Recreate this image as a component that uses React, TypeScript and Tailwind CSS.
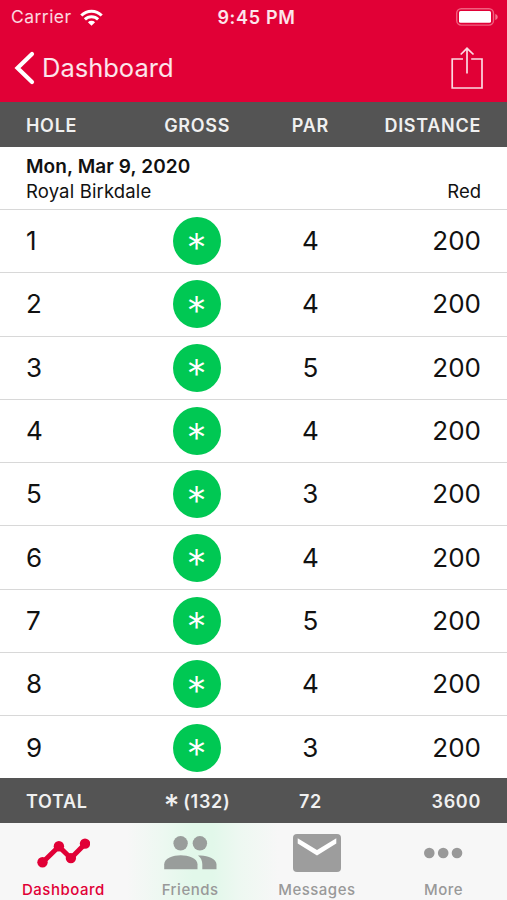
const HOLES = [
  { hole: 1, par: 4, distance: 200 },
  { hole: 2, par: 4, distance: 200 },
  { hole: 3, par: 5, distance: 200 },
  { hole: 4, par: 4, distance: 200 },
  { hole: 5, par: 3, distance: 200 },
  { hole: 6, par: 4, distance: 200 },
  { hole: 7, par: 5, distance: 200 },
  { hole: 8, par: 4, distance: 200 },
  { hole: 9, par: 3, distance: 200 },
]

function WifiIcon() {
  return (
    <svg width="23" height="18" viewBox="0 0 23 18" fill="none" stroke="#fff" strokeWidth="3">
      <path d="M1.3 6.5a14.4 14.4 0 0 1 20.4 0" />
      <path d="M4.9 10.4a9.4 9.4 0 0 1 13.2 0" />
      <path d="M11.5 16.8 7.9 13.3a5.1 5.1 0 0 1 7.2 0z" fill="#fff" stroke="none" />
    </svg>
  )
}

function BatteryIcon() {
  return (
    <svg width="42" height="18" viewBox="0 0 42 18" fill="none">
      <rect x="0.7" y="0.7" width="36.8" height="16.4" rx="4.5" stroke="#f0607f" strokeWidth="1.4" />
      <rect x="3" y="3" width="32" height="11.8" rx="1.5" fill="#fff" />
      <path d="M39.3 6c1.6.6 2.4 1.6 2.4 3s-.8 2.4-2.4 3z" fill="#f4748f" />
    </svg>
  )
}

function BackIcon() {
  return (
    <svg width="21" height="34" viewBox="0 0 21 34" fill="none" stroke="#fff" strokeWidth="4.2" strokeLinecap="round">
      <path d="M18 3 3.5 17 18 31" />
    </svg>
  )
}

function ShareIcon() {
  return (
    <svg width="32" height="44" viewBox="0 0 32 44" fill="none" stroke="#fff" strokeOpacity="0.85" strokeWidth="1.7">
      <path d="M12 13H1.2v29H31V13H20.2" />
      <path d="M16 27.5V2.5M9.7 8.5 16 2.3l6.5 6.200" />
    </svg>
  )
}

function ChartIcon() {
  return (
    <svg width="54" height="32" viewBox="0 0 54 32" fill="#e10036">
      <path d="M6.500 25.500 22.900 9.500 34.900 21.300 49 7" fill="none" stroke="#e10036" strokeWidth="5" />
      <circle cx="6.500" cy="25.200" r="5.200" />
      <circle cx="22.900" cy="9.200" r="5.200" />
      <circle cx="34.900" cy="21.100" r="5.200" />
      <circle cx="49" cy="6.600" r="5.200" />
    </svg>
  )
}

function FriendsIcon() {
  return (
    <svg width="54" height="34" viewBox="0 0 54 34" fill="#999d9b">
      <circle cx="17.6" cy="7.3" r="7.2" />
      <circle cx="36.9" cy="7.3" r="7.2" />
      <path d="M1.200 33.300v-5c0-6 9-9 16.500-9s16.800 3 16.800 9v5z" />
      <path d="M35 19.600c8-1 18.500 2.700 18.500 8.700v5H39.300v-5c0-3.600-1.500-6.500-4.300-8.700z" />
    </svg>
  )
}

function MailIcon() {
  return (
    <svg width="48" height="38" viewBox="0 0 48 38">
      <rect width="48" height="38" rx="4" fill="#9d9d9d" />
      <path d="M4.700 4.200 24 16 43.300 4.200v5.300L24 21.500 4.700 9.500z" fill="#fff" />
    </svg>
  )
}

function MoreIcon() {
  return (
    <svg width="40" height="12" viewBox="0 0 40 12" fill="#999">
      <circle cx="5.300" cy="6" r="5.300" />
      <circle cx="19.200" cy="6" r="5.300" />
      <circle cx="33" cy="6" r="5.300" />
    </svg>
  )
}

const TABS = [
  { label: 'Dashboard', icon: <ChartIcon />, active: true },
  { label: 'Friends', icon: <FriendsIcon /> },
  { label: 'Messages', icon: <MailIcon /> },
  { label: 'More', icon: <MoreIcon /> },
]

export default function App() {
  return (
    <div className="flex h-[900px] w-[507px] flex-col overflow-hidden bg-white font-['Inter','Liberation_Sans',sans-serif] text-[#111]">
      <header className="h-[102px] shrink-0 bg-[#e10036] text-white">
        <div className="grid h-[34px] grid-cols-3 items-center pl-[11px] pr-[9px]">
          <div className="flex items-center gap-2 pt-px text-[17.5px] tracking-[0.45px] text-white/85">
            Carrier <WifiIcon />
          </div>
          <div className="pl-1 pt-px text-center text-[18px] font-semibold tracking-[0.7px] text-white/90">9:45 PM</div>
          <div className="flex justify-end"><BatteryIcon /></div>
        </div>
        <div className="flex h-[68px] items-center justify-between pl-[14px] pr-[24px]">
          <button className="flex items-center gap-[7px] text-[25.5px] leading-none text-white/90">
            <BackIcon /> Dashboard
          </button>
          <button><ShareIcon /></button>
        </div>
      </header>

      <div className="grid h-[45px] shrink-0 grid-cols-4 items-center bg-[#545454] px-[26px] pt-px text-[18px] font-semibold tracking-[0.7px] text-[#f0f0f0]">
        <div>HOLE</div>
        <div className="pl-px text-center">GROSS</div>
        <div className="text-center">PAR</div>
        <div className="text-right">DISTANCE</div>
      </div>

      <div className="flex h-[63px] shrink-0 items-end justify-between border-b border-[#d8d8d8] px-[26px] pb-[6px] text-[18.5px] leading-6">
        <div>
          <div className="text-[19px] font-semibold tracking-[0.1px]">Mon, Mar 9, 2020</div>
          <div className="tracking-[0.15px]">Royal Birkdale</div>
        </div>
        <div>Red</div>
      </div>

      <div className="h-[568px] shrink-0 overflow-hidden">
        {HOLES.map(row => (
          <div key={row.hole} className="grid h-[63.3px] grid-cols-4 items-center border-b border-[#d8d8d8] px-[26px] text-[26px]">
            <div className="pb-px">{row.hole}</div>
            <div className="flex size-12 items-center justify-center justify-self-center rounded-full bg-[#00c853] pt-[13px] text-[40px] font-light leading-none text-white">*</div>
            <div className="pb-px text-center">{row.par}</div>
            <div className="pb-px text-right">{row.distance}</div>
          </div>
        ))}
      </div>

      <div className="grid h-[45px] shrink-0 grid-cols-4 items-center bg-[#545454] px-[26px] pt-px text-[18px] font-semibold tracking-[0.7px] text-[#f0f0f0]">
        <div>TOTAL</div>
        <div className="flex items-center justify-center gap-[3px] pl-px">
          <span className="pt-2 text-[30px] font-medium leading-none">*</span>
          (132)
        </div>
        <div className="text-center">72</div>
        <div className="text-right">3600</div>
      </div>

      <nav className="grid min-h-0 flex-1 grid-cols-4 bg-[#f7f7f7] bg-[linear-gradient(90deg,transparent_25%,#edf8f1_32%,#e2f8ea_38%,#e2f8ea_42%,#edf8f1_47%,transparent_55%)]">
        {TABS.map(tab => (
          <div key={tab.label} className={`flex flex-col items-center text-[15px] font-medium tracking-[0.5px] ${tab.active ? 'text-[#e10036]' : 'text-[#999]'}`}>
            <div className="flex h-[60px] items-center">{tab.icon}</div>
            <div className="leading-[14px]">{tab.label}</div>
          </div>
        ))}
      </nav>
    </div>
  )
}
